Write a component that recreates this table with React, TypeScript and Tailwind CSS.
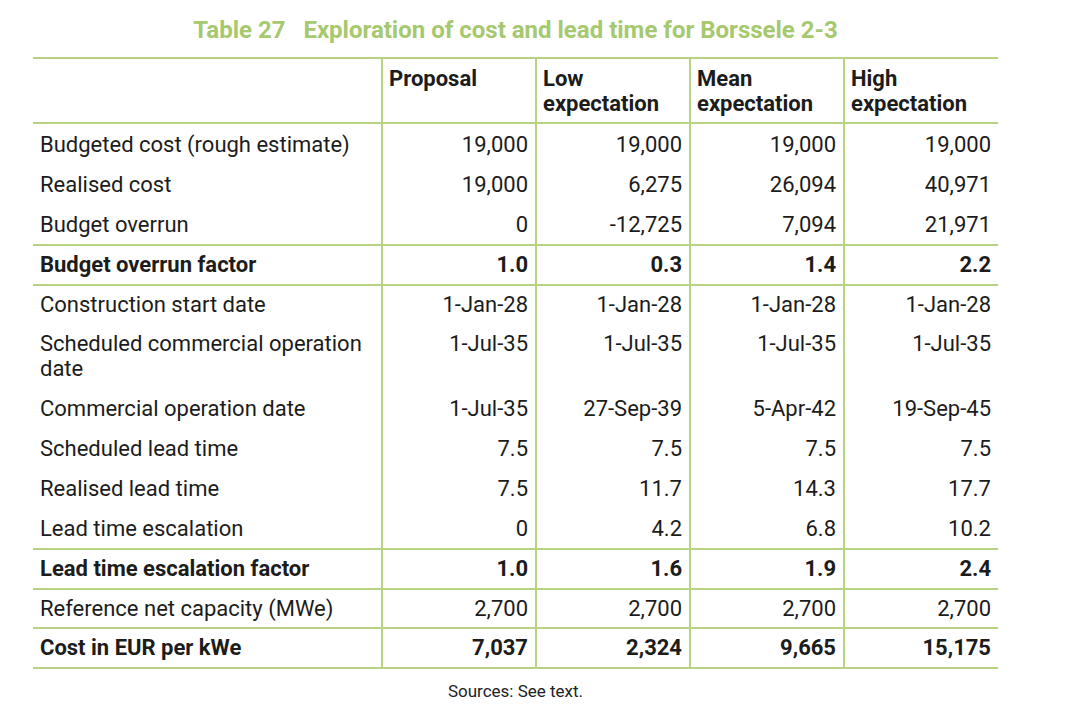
import React from "react";

type Row = {
  label: string;
  values: string[];
  bold?: boolean;
  lineAbove?: boolean;
};

const rows: Row[] = [
  { label: "Budgeted cost (rough estimate)", values: ["19,000", "19,000", "19,000", "19,000"] },
  { label: "Realised cost", values: ["19,000", "6,275", "26,094", "40,971"] },
  { label: "Budget overrun", values: ["0", "-12,725", "7,094", "21,971"] },
  { label: "Budget overrun factor", values: ["1.0", "0.3", "1.4", "2.2"], bold: true, lineAbove: true },
  { label: "Construction start date", values: ["1-Jan-28", "1-Jan-28", "1-Jan-28", "1-Jan-28"], lineAbove: true },
  {
    label: "Scheduled commercial operation date",
    values: ["1-Jul-35", "1-Jul-35", "1-Jul-35", "1-Jul-35"],
  },
  { label: "Commercial operation date", values: ["1-Jul-35", "27-Sep-39", "5-Apr-42", "19-Sep-45"] },
  { label: "Scheduled lead time", values: ["7.5", "7.5", "7.5", "7.5"] },
  { label: "Realised lead time", values: ["7.5", "11.7", "14.3", "17.7"] },
  { label: "Lead time escalation", values: ["0", "4.2", "6.8", "10.2"] },
  { label: "Lead time escalation factor", values: ["1.0", "1.6", "1.9", "2.4"], bold: true, lineAbove: true },
  { label: "Reference net capacity (MWe)", values: ["2,700", "2,700", "2,700", "2,700"], lineAbove: true },
  { label: "Cost in EUR per kWe", values: ["7,037", "2,324", "9,665", "15,175"], bold: true, lineAbove: true },
];

const headers = [
  ["Proposal"],
  ["Low", "expectation"],
  ["Mean", "expectation"],
  ["High", "expectation"],
];

function padFor(r: Row) {
  if (!r.lineAbove) return "pt-[8px] pb-[7px]";
  return r.bold ? "pt-[6px] pb-[7px]" : "pt-[6px] pb-[6px]";
}

export default function App() {
  return (
    <div className="min-h-[716px] w-[1079px] bg-white font-['Roboto',sans-serif] text-[#1c1c1c]">
      <div className="w-[965px] ml-[33px] pt-[15px]">
        {/* Title */}
        <h1 className="text-center text-[24px] leading-[30px] font-bold text-[#a6c86f] mb-[12px]">
          Table 27&nbsp;&nbsp; Exploration of cost and lead time for Borssele 2-3
        </h1>

        <table className="w-[965px] table-fixed border-collapse text-[22px] leading-[25px]">
          <colgroup>
            <col className="w-[349px]" />
            <col className="w-[154px]" />
            <col className="w-[154px]" />
            <col className="w-[154px]" />
            <col className="w-[154px]" />
          </colgroup>
          <thead>
            <tr className="border-t-2 border-b-2 border-[#b9d281]">
              <th className="pt-[7px] pb-[6px]"></th>
              {headers.map((h, i) => (
                <th
                  key={i}
                  className="border-l-2 border-[#b9d281] pl-[6px] pt-[7px] pb-[6px] text-left align-top font-bold"
                >
                  {h.map((line, j) => (
                    <div key={j}>{line}</div>
                  ))}
                </th>
              ))}
            </tr>
          </thead>
          <tbody>
            {rows.map((r, i) => {
              const pad = padFor(r);
              const last = i === rows.length - 1;
              return (
                <tr
                  key={i}
                  className={
                    (r.lineAbove ? "border-t-2 border-[#b9d281] " : "") +
                    (last ? "border-b-2 border-[#b9d281] " : "") +
                    (r.bold ? "font-bold" : "")
                  }
                >
                  <td className={`pl-[7px] pr-[8px] align-top ${pad}`}>{r.label}</td>
                  {r.values.map((v, j) => (
                    <td
                      key={j}
                      className={`border-l-2 border-[#b9d281] pr-[7px] text-right align-top ${pad}`}
                    >
                      {v}
                    </td>
                  ))}
                </tr>
              );
            })}
          </tbody>
        </table>

        <p className="text-center text-[17px] leading-[20px] mt-[12px] text-[#222]">
          Sources: See text.
        </p>
      </div>
    </div>
  );
}
